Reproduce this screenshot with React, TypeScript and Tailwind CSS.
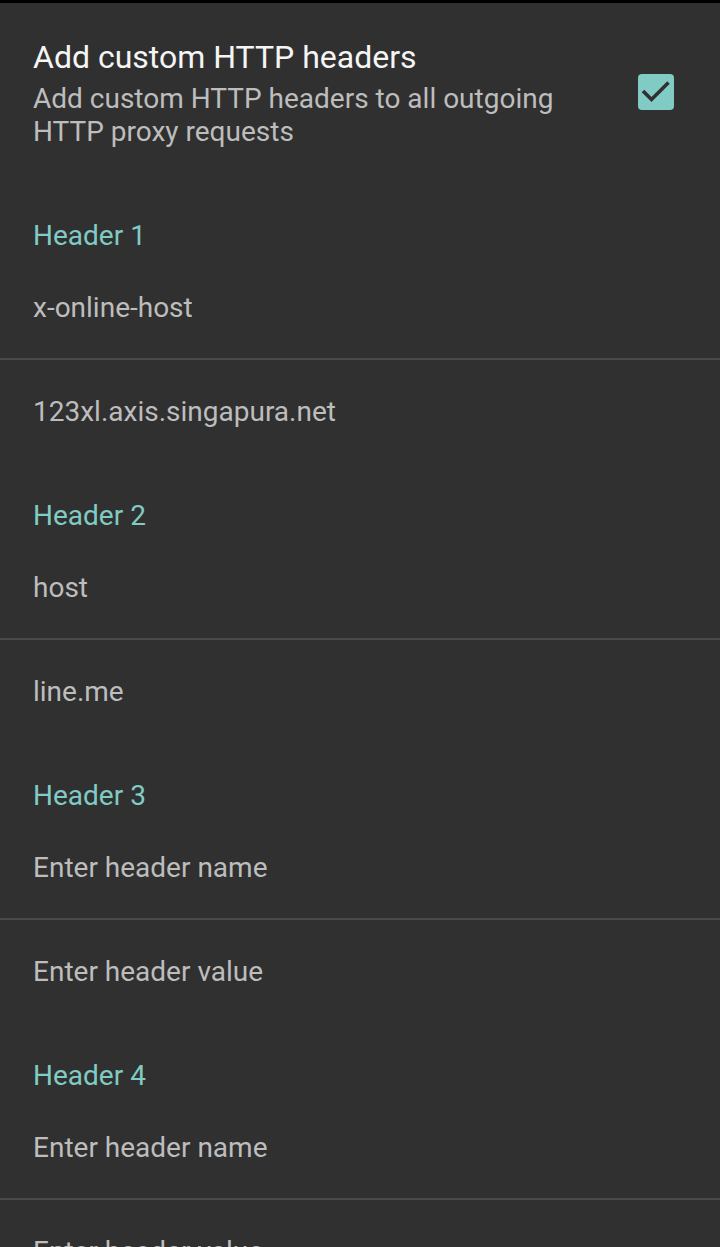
import React from 'react';

type Header = { label: string; name: string; value: string };

const headers: Header[] = [
  { label: 'Header 1', name: 'x-online-host', value: '123xl.axis.singapura.net' },
  { label: 'Header 2', name: 'host', value: 'line.me' },
  { label: 'Header 3', name: '', value: '' },
  { label: 'Header 4', name: '', value: '' },
];

const HeaderGroup: React.FC<{ header: Header }> = ({ header }) => (
  <div className="px-[33px] pb-[68px]">
    <div className="text-[28px] leading-[36px] text-[#80cbc4]">{header.label}</div>
    <div className="mt-[36px] text-[28px] leading-[36px] text-[#bdbdbd]">
      {header.name || 'Enter header name'}
    </div>
    <div className="-mx-[33px] mt-[32px] h-[2px] bg-[#4a4a4a]" />
    <div className="mt-[34px] text-[28px] leading-[36px] text-[#bdbdbd]">
      {header.value || 'Enter header value'}
    </div>
  </div>
);

export default function App() {
  return (
    <div
      className="h-[1247px] w-[720px] overflow-hidden border-t-[3px] border-black bg-[#303030]"
      style={{ fontFamily: 'Roboto, "Noto Sans", sans-serif' }}
    >
      <div className="flex items-center pl-[33px] pr-[46px] pt-[36px]">
        <div className="flex-1">
          <div className="text-[32px] leading-[36px] text-[#f5f5f5]">Add custom HTTP headers</div>
          <div className="mt-[7px] text-[28px] leading-[33px] text-[#bdbdbd]">
            Add custom HTTP headers to all outgoing
            <br />
            HTTP proxy requests
          </div>
        </div>
        <div className="mb-[4px] flex h-[36px] w-[36px] items-center justify-center rounded-[4px] bg-[#80cbc4]">
          <svg width="36" height="36" viewBox="0 0 36 36" fill="none">
            <path d="M5 17 L13.5 25.5 L30.5 8.5" stroke="#303030" strokeWidth="3.6" />
          </svg>
        </div>
      </div>
      <div className="mt-[70px]">
        {headers.map((h) => (
          <HeaderGroup key={h.label} header={h} />
        ))}
      </div>
    </div>
  );
}
